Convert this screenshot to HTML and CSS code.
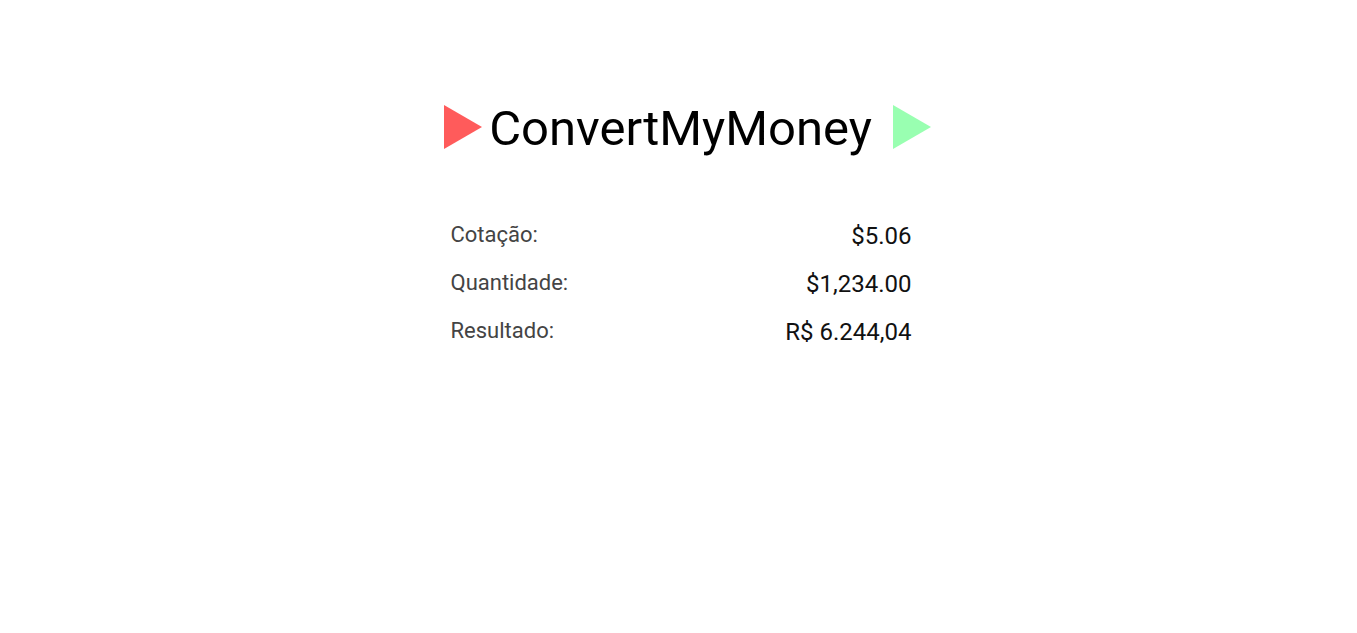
FILE: index.html
```html
<!DOCTYPE html>
<html lang="pt-BR">
<head>
<meta charset="utf-8">
<title>ConvertMyMoney</title>
<link rel="stylesheet" href="styles.css">
</head>
<body>
<main class="page">
  <header class="brand">
    <svg class="tri" width="38" height="44" viewBox="0 0 38 44"><polygon points="0,0 38,22 0,44" fill="#ff5b5b"/></svg>
    <h1 class="title">ConvertMyMoney</h1>
    <svg class="tri tri-end" width="38" height="44" viewBox="0 0 38 44"><polygon points="0,0 38,22 0,44" fill="#99ffb1"/></svg>
  </header>
  <section class="results">
    <div class="row"><span class="label">Cotação:</span><span class="value">$5.06</span></div>
    <div class="row"><span class="label">Quantidade:</span><span class="value">$1,234.00</span></div>
    <div class="row"><span class="label">Resultado:</span><span class="value">R$ 6.244,04</span></div>
  </section>
</main>
</body>
</html>
```

FILE: styles.css
```css
html, body {
  margin: 0;
  padding: 0;
  background: #ffffff;
}
body {
  font-family: Roboto, "Liberation Sans", sans-serif;
  color: #000;
}
.page {
  display: flex;
  flex-direction: column;
  align-items: center;
  padding-top: 105px;
}
.brand {
  display: flex;
  align-items: center;
  margin-left: 18px;
}
.tri {
  display: block;
}
.title {
  margin: 0 0 0 7px;
  font-weight: 400;
  font-size: 49px;
  line-height: 44px;
  position: relative;
  top: 2px;
}
.tri-end {
  margin-left: 21px;
}
.results {
  width: 461px;
  margin-top: 63px;
  margin-left: 5px;
  display: flex;
  flex-direction: column;
}
.row {
  display: flex;
  justify-content: space-between;
  align-items: baseline;
  height: 48px;
  line-height: 48px;
}
.label {
  font-size: 22px;
  color: #444;
  position: relative;
  top: -2px;
}
.value {
  font-size: 24px;
  color: #111;
}
```
